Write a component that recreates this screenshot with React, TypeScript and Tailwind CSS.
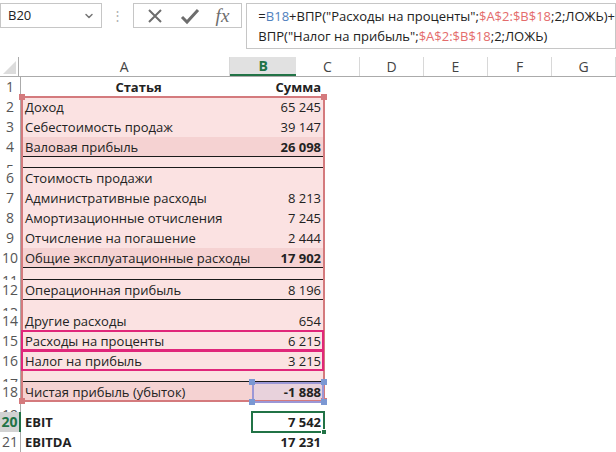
import { ChevronDown } from 'lucide-react';

type Row = {
  n: number;
  a?: string;
  b?: string;
  small?: boolean;
  bold?: boolean;
  boldA?: boolean;
  line?: boolean;
  fill?: 'light' | 'dark';
};

const rows: Row[] = [
  { n: 1, a: 'Статья', b: 'Сумма' },
  { n: 2, a: 'Доход', b: '65 245', fill: 'light' },
  { n: 3, a: 'Себестоимость продаж', b: '39 147', fill: 'light' },
  { n: 4, a: 'Валовая прибыль', b: '26 098', bold: true, line: true, fill: 'dark' },
  { n: 5, small: true, line: true, fill: 'light' },
  { n: 6, a: 'Стоимость продажи', fill: 'light' },
  { n: 7, a: 'Административные расходы', b: '8 213', fill: 'light' },
  { n: 8, a: 'Амортизационные отчисления', b: '7 245', fill: 'light' },
  { n: 9, a: 'Отчисление на погашение', b: '2 444', fill: 'light' },
  { n: 10, a: 'Общие эксплуатационные расходы', b: '17 902', bold: true, line: true, fill: 'dark' },
  { n: 11, small: true, line: true, fill: 'light' },
  { n: 12, a: 'Операционная прибыль', b: '8 196', line: true, fill: 'light' },
  { n: 13, small: true, fill: 'light' },
  { n: 14, a: 'Другие расходы', b: '654', fill: 'light' },
  { n: 15, a: 'Расходы на проценты', b: '6 215', fill: 'light' },
  { n: 16, a: 'Налог на прибыль', b: '3 215', fill: 'light' },
  { n: 17, small: true, line: true, fill: 'light' },
  { n: 18, a: 'Чистая прибыль (убыток)', b: '-1 888', bold: true, fill: 'dark' },
  { n: 19, small: true },
  { n: 20, a: 'EBIT', b: '7 542', bold: true, boldA: true },
  { n: 21, a: 'EBITDA', b: '17 231', bold: true, boldA: true },
];

const otherCols = ['C', 'D', 'E', 'F', 'G'];

function Handle({ className }: { className: string }) {
  return <div className={`absolute w-[6px] h-[6px] ${className}`} />;
}

export default function App() {
  return (
    <div className="w-[616px] h-[452px] overflow-hidden bg-white text-[#222] font-['Open_Sans',sans-serif]">
      {/* formula bar */}
      <div className="flex h-[57px] items-start pt-[3px]">
        <div className="flex h-[25px] w-[102px] items-center justify-between border border-[#c6c6c6] pl-[7px] pr-[6px] text-[13px]">
          <span>B20</span>
          <ChevronDown className="w-3 h-3 text-[#777]" strokeWidth={3} />
        </div>
        <div className="w-[31px] h-[25px] flex items-center justify-center text-[#b0b0b0] text-[13px]">⋮</div>
        <div className="flex h-[25px] w-[110px] items-center justify-around border border-[#c6c6c6] px-1">
          <svg width="18" height="18" viewBox="0 0 18 18">
            <path d="M3 3 L15 15 M15 3 L3 15" stroke="#6d6d6d" strokeWidth="2" fill="none" />
          </svg>
          <svg width="20" height="18" viewBox="0 0 20 18">
            <path d="M2 10 L7 15 L18 3" stroke="#6d6d6d" strokeWidth="3" fill="none" />
          </svg>
          <span className="font-['Liberation_Serif',serif] italic text-[19px] text-[#6d6d6d] leading-none">fx</span>
        </div>
        <div className="ml-[4px] h-[46px] flex-1 border border-[#c6c6c6] pl-[11px] pt-[2px] text-[13px] leading-[20px] whitespace-nowrap">
          <div>
            =<span className="text-[#4f81bd]">B18</span>+ВПР("Расходы на проценты";
            <span className="text-[#e46c6c]">$A$2:$B$18</span>;2;ЛОЖЬ)+
          </div>
          <div>
            ВПР("Налог на прибыль";<span className="text-[#e46c6c]">$A$2:$B$18</span>;2;ЛОЖЬ)
          </div>
        </div>
      </div>

      {/* column headers */}
      <div className="flex h-[20px] border-b border-[#ababab] text-[14px] text-[#444]">
        <div className="w-[21px] border-r border-[#ababab] relative">
          <svg className="absolute right-[2px] bottom-[2px]" width="13" height="13" viewBox="0 0 13 13">
            <path d="M13 0 L13 13 L0 13 Z" fill="#dcdcdc" />
          </svg>
        </div>
        <div className="w-[231px] flex items-center justify-center border-r border-[#d8d8d8]">A</div>
        <div className="w-[72px] flex items-center justify-center bg-[#e1e1e1] border-b-2 border-[#217346] text-[#217346] font-bold">
          B
        </div>
        {otherCols.map((c) => (
          <div key={c} className="w-[64px] shrink-0 flex items-center justify-center border-r border-[#d8d8d8]">
            {c}
          </div>
        ))}
      </div>

      {/* grid body */}
      <div className="relative">
        {rows.map((r) => {
          const bg =
            r.fill === 'light' ? 'bg-[#fbe2e2]' : r.fill === 'dark' ? 'bg-[#f5d2d2]' : 'bg-white';
          const sel = r.n === 20;
          return (
            <div key={r.n} className={`flex ${r.small ? (r.n === 19 ? 'h-[10px]' : r.n === 11 ? 'h-[12px]' : 'h-[11px]') : 'h-[20px]'} text-[13px]`}>
              <div
                className={`w-[21px] shrink-0 overflow-hidden text-center text-[14px] leading-[20px] ${
                  r.small ? 'pt-[3px]' : ''
                } ${sel ? 'bg-[#d2d2d2] text-[#217346] font-bold border-r-2 border-[#217346]' : 'text-[#555] border-r border-[#ababab]'}`}
              >
                {r.n}
              </div>
              <div className={`flex w-[303px] shrink-0 ${bg} ${r.line ? 'border-b border-[#1a1a1a]' : ''}`}>
                <div
                  className={`w-[231px] shrink-0 overflow-hidden whitespace-nowrap leading-[20px] pl-[4px] ${
                    r.n === 1 ? 'text-center font-bold' : ''
                  } ${r.boldA ? 'font-bold' : ''}`}
                >
                  {r.a}
                </div>
                <div
                  className={`w-[72px] shrink-0 text-right pr-[3px] leading-[20px] whitespace-nowrap ${
                    r.bold || r.n === 1 ? 'font-bold' : ''
                  } ${r.n === 18 ? 'bg-[#e8d2dc]' : ''}`}
                >
                  {r.b}
                </div>
              </div>
            </div>
          );
        })}

        {/* referenced range $A$2:$B$18 */}
        <div className="absolute left-[21px] top-[19px] w-[304px] h-[306px] border-2 border-[#d47a7d] pointer-events-none" />
        <Handle className="left-[19px] top-[17px] bg-[#d47a7d]" />
        <Handle className="left-[321px] top-[17px] bg-[#d47a7d]" />
        <Handle className="left-[19px] top-[321px] bg-[#d47a7d]" />
        <Handle className="left-[321px] top-[321px] bg-[#d47a7d]" />

        {/* B18 reference */}
        <div className="absolute left-[252px] top-[305px] w-[72px] h-[21px] border-2 border-[#9b97d6]" />
        <Handle className="left-[249px] top-[302px] bg-[#7b98d3]" />
        <Handle className="left-[321px] top-[302px] bg-[#7b98d3]" />
        <Handle className="left-[249px] top-[322px] bg-[#7b98d3]" />
        <Handle className="left-[321px] top-[322px] bg-[#7b98d3]" />

        {/* highlighted rows 15, 16 */}
        <div className="absolute left-[21px] top-[253px] w-[303px] h-[21px] border-2 border-[#e0267a]" />
        <div className="absolute left-[21px] top-[273px] w-[303px] h-[21px] border-2 border-[#e0267a]" />

        {/* active cell B20 */}
        <div className="absolute left-[251px] top-[334px] w-[74px] h-[22px] border-2 border-[#217346]" />
        <div className="absolute left-[321px] top-[352px] w-[6px] h-[6px] bg-[#217346] border border-white" />
      </div>
    </div>
  );
}
